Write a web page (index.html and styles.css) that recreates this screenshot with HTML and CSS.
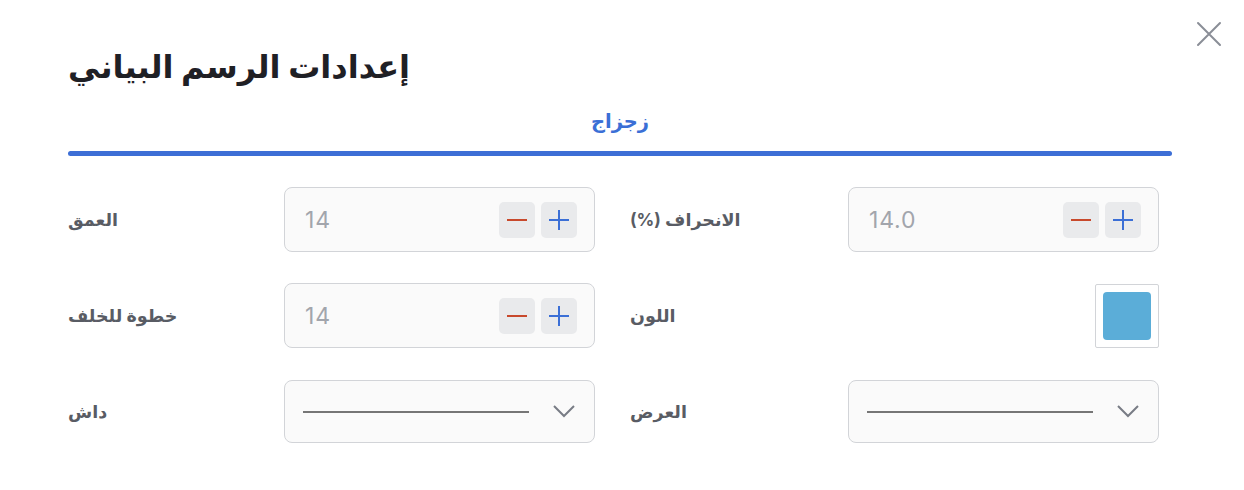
FILE: index.html
```html
<!DOCTYPE html>
<html lang="ar">
<head>
<meta charset="utf-8">
<title>إعدادات الرسم البياني</title>
<link rel="stylesheet" href="styles.css">
</head>
<body>
<div class="dialog">
  <button class="close" aria-label="close">
    <svg width="26" height="26" viewBox="0 0 26 26"><path d="M2 2 L24 24 M24 2 L2 24" stroke="#8a8e97" stroke-width="2" stroke-linecap="round" fill="none"/></svg>
  </button>
  <h1 class="title"><span dir="rtl">إعدادات الرسم البياني</span></h1>
  <div class="tabs">
    <div class="tab"><span dir="rtl">زجزاج</span></div>
    <div class="tab-bar"></div>
  </div>
  <div class="form">
    <div class="field">
      <div class="label"><span dir="rtl">العمق</span></div>
      <div class="control stepper">
        <span class="value">14</span>
        <span class="btns">
          <span class="btn minus"><svg width="20" height="20" viewBox="0 0 20 20"><path d="M0 10 H20" stroke="#c8492c" stroke-width="2"/></svg></span>
          <span class="btn plus"><svg width="20" height="20" viewBox="0 0 20 20"><path d="M0 10 H20 M10 0 V20" stroke="#3b6fd6" stroke-width="2"/></svg></span>
        </span>
      </div>
    </div>
    <div class="field">
      <div class="label"><span dir="rtl">الانحراف (%)</span></div>
      <div class="control stepper">
        <span class="value">14.0</span>
        <span class="btns">
          <span class="btn minus"><svg width="20" height="20" viewBox="0 0 20 20"><path d="M0 10 H20" stroke="#c8492c" stroke-width="2"/></svg></span>
          <span class="btn plus"><svg width="20" height="20" viewBox="0 0 20 20"><path d="M0 10 H20 M10 0 V20" stroke="#3b6fd6" stroke-width="2"/></svg></span>
        </span>
      </div>
    </div>
    <div class="field">
      <div class="label"><span dir="rtl">خطوة للخلف</span></div>
      <div class="control stepper">
        <span class="value">14</span>
        <span class="btns">
          <span class="btn minus"><svg width="20" height="20" viewBox="0 0 20 20"><path d="M0 10 H20" stroke="#c8492c" stroke-width="2"/></svg></span>
          <span class="btn plus"><svg width="20" height="20" viewBox="0 0 20 20"><path d="M0 10 H20 M10 0 V20" stroke="#3b6fd6" stroke-width="2"/></svg></span>
        </span>
      </div>
    </div>
    <div class="field">
      <div class="label"><span dir="rtl">اللون</span></div>
      <div class="swatch-wrap">
        <span class="swatch"><span class="swatch-color"></span></span>
      </div>
    </div>
    <div class="field">
      <div class="label"><span dir="rtl">داش</span></div>
      <div class="control select">
        <span class="line"></span>
        <svg class="chev" width="22" height="13" viewBox="0 0 22 13"><path d="M1 1 L11 11 L21 1" stroke="#787c85" stroke-width="2" fill="none"/></svg>
      </div>
    </div>
    <div class="field">
      <div class="label"><span dir="rtl">العرض</span></div>
      <div class="control select">
        <span class="line"></span>
        <svg class="chev" width="22" height="13" viewBox="0 0 22 13"><path d="M1 1 L11 11 L21 1" stroke="#787c85" stroke-width="2" fill="none"/></svg>
      </div>
    </div>
  </div>
</div>
</body>
</html>
```
FILE: styles.css
```css
* { box-sizing: border-box; }
html, body { margin: 0; padding: 0; background: #ffffff; }
body {
  font-family: Inter, "DejaVu Sans", sans-serif;
  width: 1244px;
  height: 490px;
  overflow: hidden;
}
.dialog {
  position: relative;
  padding: 44px 72px 0 68px;
}
.close {
  position: absolute;
  top: 21px;
  left: 1196px;
  width: 26px;
  height: 26px;
  padding: 0;
  border: 0;
  background: none;
  display: flex;
}
.title {
  margin: 0;
  height: 56px;
  font-size: 32px;
  line-height: 46px;
  font-weight: 700;
  color: #1f2025;
}
.tabs {
  display: flex;
  flex-direction: column;
  align-items: stretch;
}
.tab {
  text-align: center;
  font-size: 19.5px;
  font-weight: 700;
  line-height: 30px;
  height: 51px;
  padding-top: 6px;
  color: #3b6fd6;
}
.tab-bar {
  height: 5px;
  border-radius: 3px;
  background: #3d6fd6;
}
.form {
  margin-top: 31px;
  display: grid;
  grid-template-columns: 527px 529px;
  column-gap: 35px;
  row-gap: 31px;
}
.field {
  display: grid;
  grid-template-columns: 1fr 311px;
  align-items: center;
}
.label {
  font-size: 17.5px;
  font-weight: 700;
  color: #595c64;
}
.control {
  height: 65px;
  background: #fafafa;
  border: 1px solid #d2d4d8;
  border-radius: 8px;
  display: flex;
  align-items: center;
}
.stepper {
  padding: 0 17px 0 20px;
  justify-content: space-between;
}
.value {
  font-size: 23px;
  letter-spacing: 0.8px;
  color: #a2a5ac;
}
.btns {
  display: flex;
  gap: 6px;
}
.btn {
  width: 36px;
  height: 36px;
  border-radius: 5px;
  background: #e9eaec;
  display: flex;
  align-items: center;
  justify-content: center;
}
.swatch-wrap {
  height: 65px;
  display: flex;
  align-items: center;
  justify-content: flex-end;
}
.swatch {
  width: 64px;
  height: 64px;
  border: 1px solid #d2d4d8;
  border-radius: 2px;
  padding: 7px;
  display: flex;
}
.swatch-color {
  flex: 1;
  background: #5badd8;
  border-radius: 4px;
}
.select {
  height: 63px;
  margin-top: 1px;
  padding: 0 19px 0 18px;
  justify-content: space-between;
}
.line {
  width: 226px;
  height: 2px;
  background: #767676;
}
.chev { display: block; }
```
